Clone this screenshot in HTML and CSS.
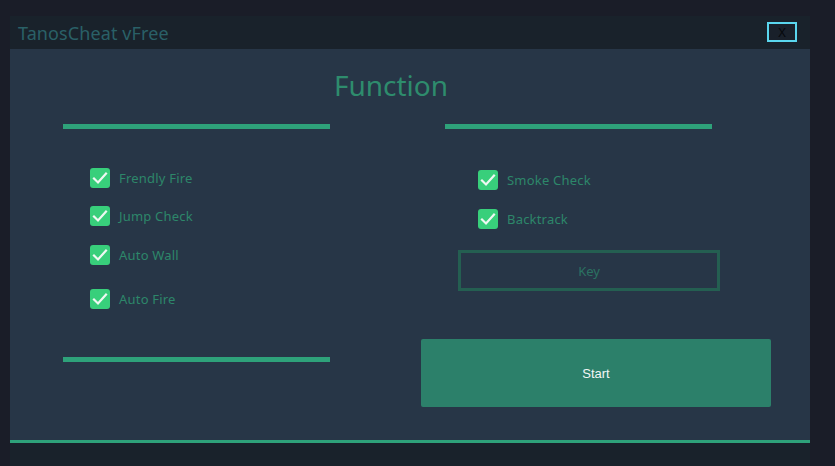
FILE: index.html
```html
<!DOCTYPE html>
<html>
<head>
<meta charset="utf-8">
<link rel="stylesheet" href="styles.css">
</head>
<body>
<div class="window">
  <div class="titlebar">
    <span class="title">TanosCheat vFree</span>
    <button class="close">X</button>
  </div>
  <div class="content">
    <h1 class="heading">Function</h1>
    <div class="columns">
      <div class="col col-left">
        <div class="rule"></div>
        <ul class="checks">
          <li class="check r1"><span class="box"><svg viewBox="0 0 20 20"><polyline points="4,10.5 8,14.5 16,5.5"/></svg></span><span class="label">Frendly Fire</span></li>
          <li class="check r2"><span class="box"><svg viewBox="0 0 20 20"><polyline points="4,10.5 8,14.5 16,5.5"/></svg></span><span class="label">Jump Check</span></li>
          <li class="check r3"><span class="box"><svg viewBox="0 0 20 20"><polyline points="4,10.5 8,14.5 16,5.5"/></svg></span><span class="label">Auto Wall</span></li>
          <li class="check r4"><span class="box"><svg viewBox="0 0 20 20"><polyline points="4,10.5 8,14.5 16,5.5"/></svg></span><span class="label">Auto Fire</span></li>
        </ul>
        <div class="rule rule-bottom"></div>
      </div>
      <div class="col col-right">
        <div class="rule"></div>
        <ul class="checks checks-right">
          <li class="check s1"><span class="box"><svg viewBox="0 0 20 20"><polyline points="4,10.5 8,14.5 16,5.5"/></svg></span><span class="label">Smoke Check</span></li>
          <li class="check s2"><span class="box"><svg viewBox="0 0 20 20"><polyline points="4,10.5 8,14.5 16,5.5"/></svg></span><span class="label">Backtrack</span></li>
        </ul>
        <button class="key">Key</button>
        <button class="start">Start</button>
      </div>
    </div>
  </div>
  <div class="footer"></div>
</div>
</body>
</html>
```
FILE: styles.css
```css
* { box-sizing: border-box; }
html, body { margin: 0; padding: 0; }
body {
  background: #1a1d28;
  width: 835px;
  height: 466px;
  overflow: hidden;
  font-family: "Noto Sans", "Open Sans", sans-serif;
}
.window {
  margin: 16px 0 0 10px;
  width: 800px;
  height: 450px;
  display: flex;
  flex-direction: column;
}
.titlebar {
  height: 33px;
  background: #19222b;
  display: flex;
  align-items: center;
  justify-content: space-between;
  padding: 0 13px 0 8px;
}
.title {
  color: #2a6067;
  font-size: 18px;
  line-height: 1;
  margin-top: 1px;
  letter-spacing: 0.1px;
}
.close {
  width: 30px;
  height: 20px;
  margin-top: -1px;
  border: 2px solid #5ad6ee;
  background: #19202a;
  color: #06080c;
  font-family: "Noto Sans", sans-serif;
  font-size: 13px;
  line-height: 16px;
  text-align: center;
  padding: 0;
}
.content {
  flex: 1;
  background: #273647;
  padding: 0 0 0 53px;
  border-bottom: 3px solid #2ea27a;
}
.heading {
  margin: 0;
  width: 649px;
  text-align: center;
  font-weight: normal;
  font-size: 28px;
  line-height: 1;
  color: #2e8c6d;
  padding: 22px 0 0 7px;
  height: 75px;
}
.columns {
  display: flex;
  gap: 115px;
}
.col { width: 267px; }
.rule {
  height: 5px;
  background: #2ea27a;
}
.checks {
  list-style: none;
  margin: 0;
  padding: 0 0 0 27px;
}
.check {
  display: flex;
  align-items: center;
  height: 19px;
}
.r1 { margin-top: 39px; }
.r2 { margin-top: 19px; }
.r3 { margin-top: 20px; }
.r4 { margin-top: 25px; }
.checks-right { padding-left: 33px; }
.s1 { margin-top: 41px; }
.s2 { margin-top: 20px; }
.box {
  width: 20px;
  height: 20px;
  flex: none;
  border-radius: 3px;
  background: #38cf7b;
  display: flex;
}
.box svg {
  width: 20px;
  height: 20px;
  fill: none;
  stroke: #eef8f2;
  stroke-width: 2.2;
  stroke-linecap: square;
}
.label {
  margin-left: 9px;
  font-size: 13px;
  color: #2d876a;
  letter-spacing: 0.2px;
}
.rule-bottom { margin-top: 49px; }
.key {
  display: block;
  margin: 22px 0 0 13px;
  width: 262px;
  height: 41px;
  border: 3px solid #245f51;
  background: transparent;
  color: #2b7262;
  font-family: "Noto Sans", sans-serif;
  font-size: 13px;
  padding: 0;
}
.start {
  display: block;
  margin: 48px 0 0 -24px;
  width: 350px;
  height: 68px;
  border: none;
  border-radius: 2px;
  background: #2c806a;
  color: #f2f7f5;
  font-family: "Liberation Sans", Arial, sans-serif;
  font-size: 13px;
  padding: 0;
}
.footer {
  height: 23px;
  background: #19222b;
  flex: none;
}
```
